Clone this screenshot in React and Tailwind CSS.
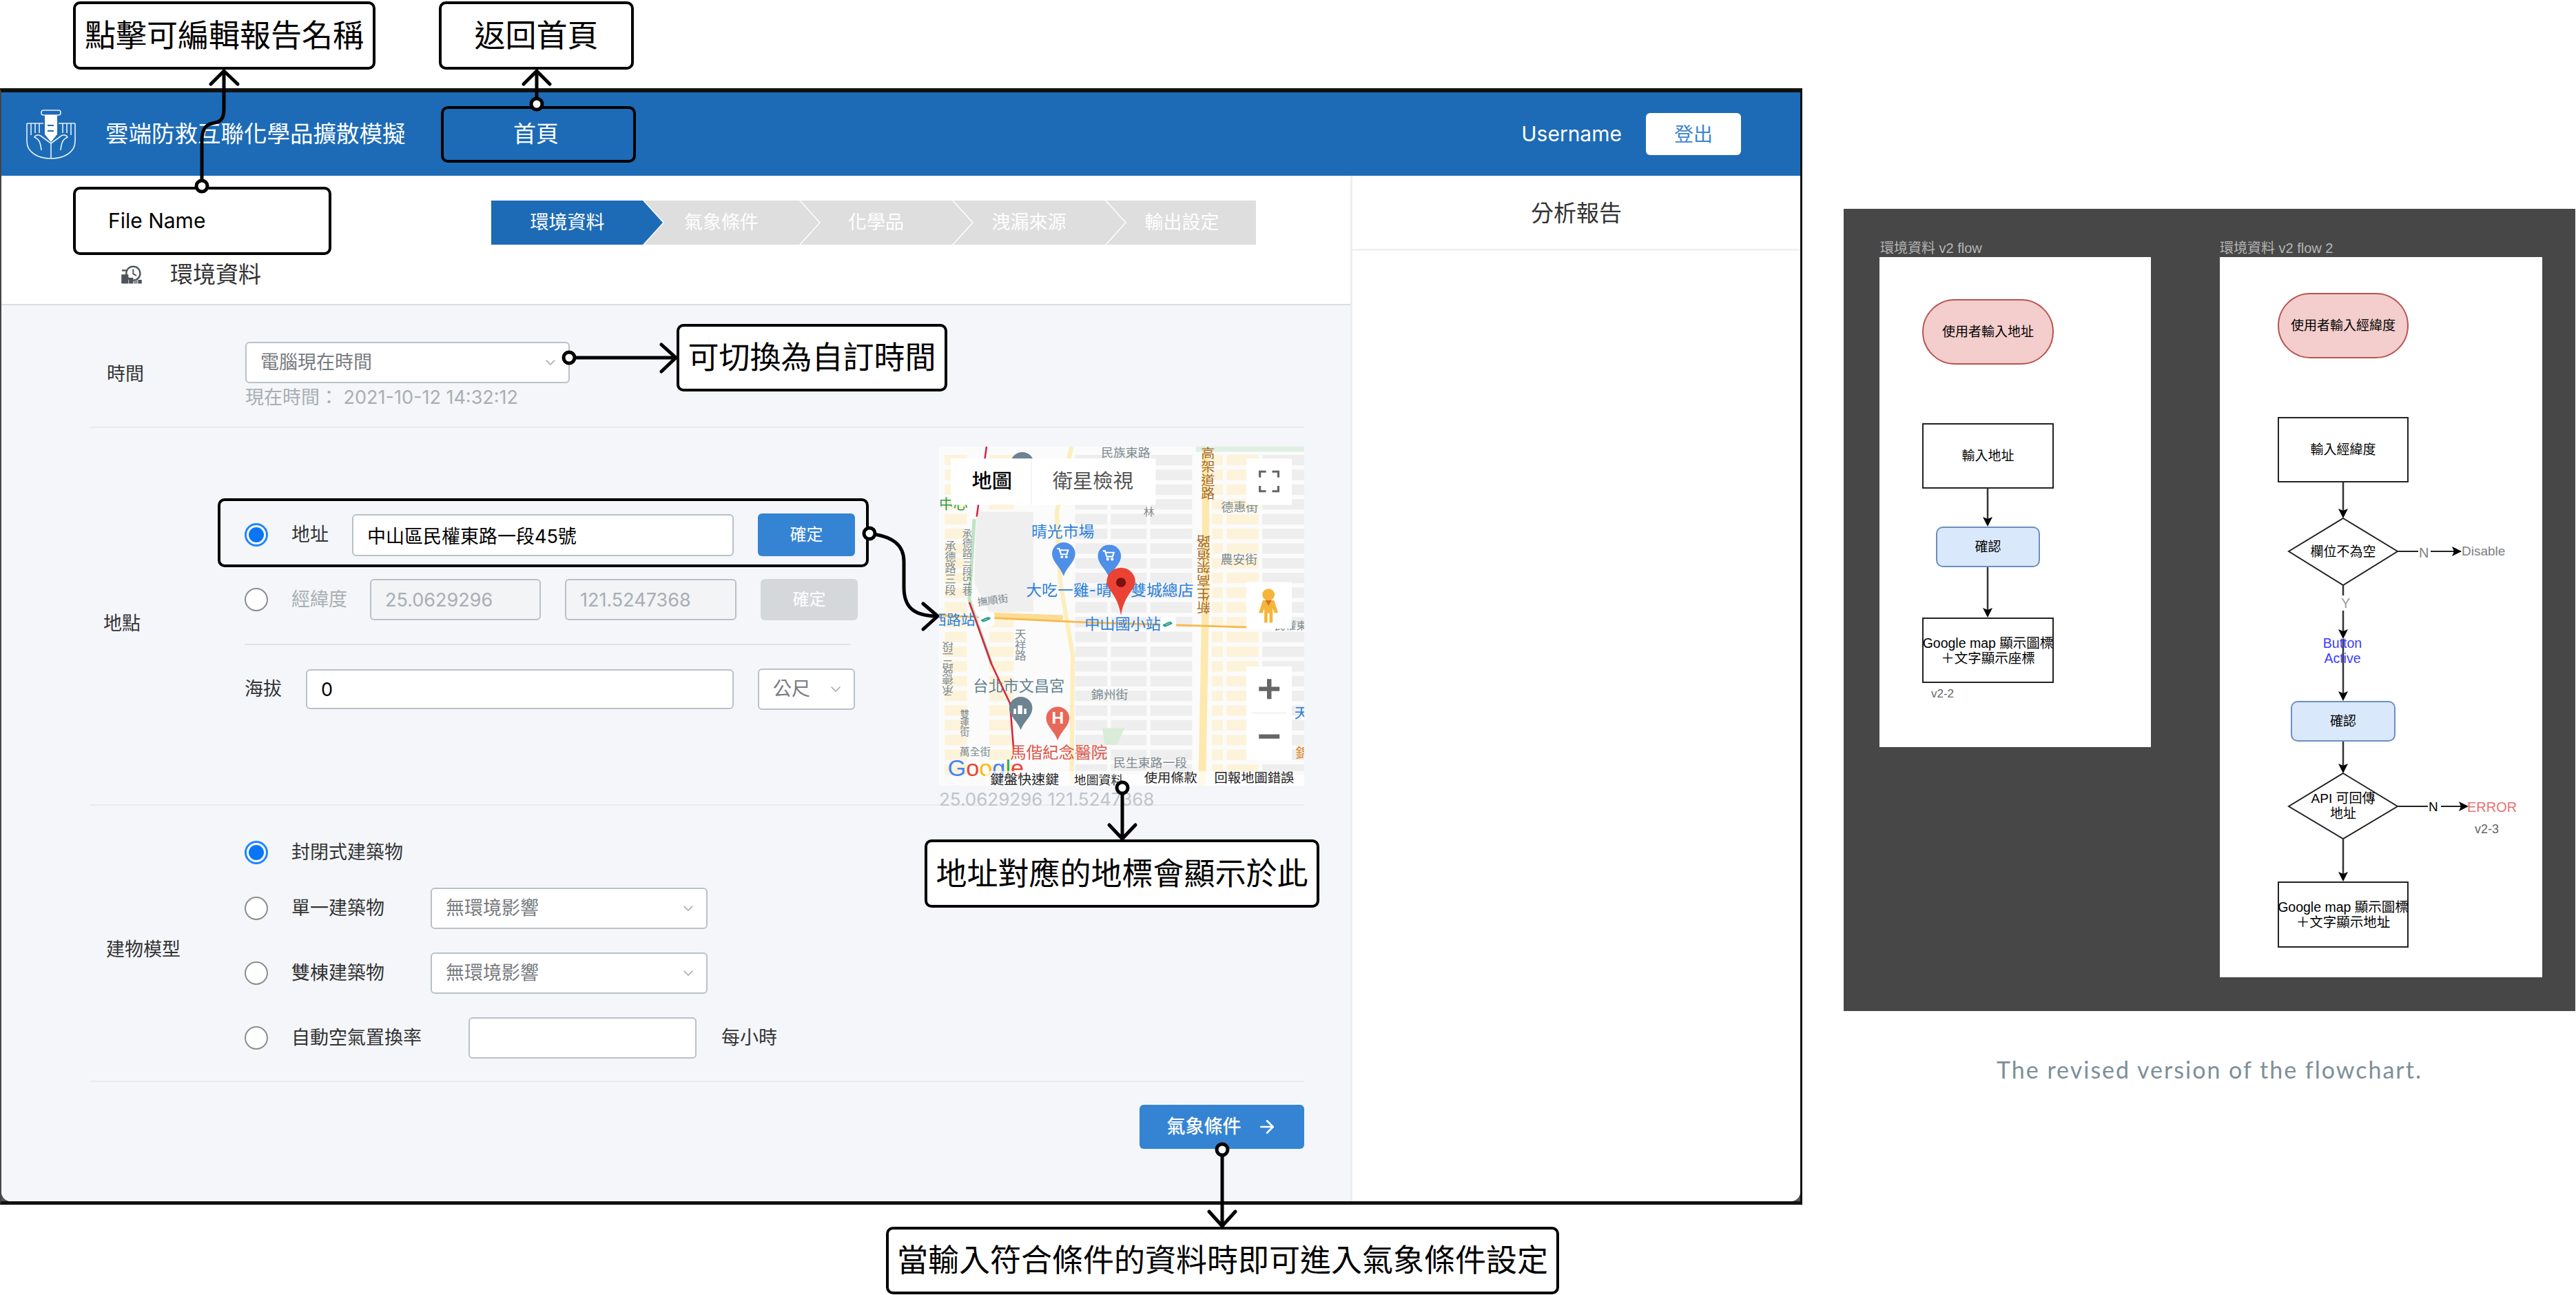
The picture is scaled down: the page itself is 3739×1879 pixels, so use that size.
import { ArrowRight, ChevronDown } from "lucide-react";

const steps = [
  { label: "環境資料", box: "w-[249px] pr-[28px] bg-[#1d6bb6] text-white [clip-path:polygon(0_0,calc(100%-29px)_0,100%_50%,calc(100%-29px)_100%,0_100%)]" },
  { label: "氣象條件", box: "w-[254px] -ml-[27px] pr-[30px] bg-[#dedede] text-white [clip-path:polygon(0_0,calc(100%-29px)_0,100%_50%,calc(100%-29px)_100%,0_100%,29px_50%)]" },
  { label: "化學品", box: "w-[249px] -ml-[27px] pr-[30px] bg-[#dedede] text-white [clip-path:polygon(0_0,calc(100%-29px)_0,100%_50%,calc(100%-29px)_100%,0_100%,29px_50%)]" },
  { label: "洩漏來源", box: "w-[249px] -ml-[27px] pr-[30px] bg-[#dedede] text-white [clip-path:polygon(0_0,calc(100%-29px)_0,100%_50%,calc(100%-29px)_100%,0_100%,29px_50%)]" },
  { label: "輸出設定", box: "w-[217px] -ml-[27px] pl-[2px] bg-[#dedede] text-white [clip-path:polygon(0_0,100%_0,100%_100%,0_100%,29px_50%)]" },
];

function Logo() {
  return (
    <svg viewBox="0 0 100 90" className="w-[100px] h-[90px] -mx-[12px]" fill="none" stroke="#e6f0fa" strokeWidth="1.6">
      <rect x="35" y="10" width="28" height="7" rx="3" />
      <path d="M40 17h18v28l-9 11-9-11z" fill="#fff" stroke="none" />
      <path d="M44 32h9M44 40h9" stroke="#1d6bb6" strokeWidth="2" />
      <path d="M14 29v26c0 16 16 25 35 25s35-9 35-25V29" />
      <path d="M14 29h24M60 29h24M20 29v17M26 29v14M32 29v14M66 29v14M72 29v14M78 29v17" />
      <path d="M49 80V58L34 47c-3-2-8-1-9 2 9 4 9 12 10 19M49 58l15-11c3-2 8-1 9 2-9 4-9 12-10 19" />
    </svg>
  );
}

function SectionIcon() {
  return (
    <svg viewBox="13 6 42 36" className="w-[34px] h-[28px]" fill="#4d5358">
      <circle cx="37" cy="21" r="13" fill="none" stroke="#4d5358" strokeWidth="3" />
      <path d="M37 13v9l6 3" fill="none" stroke="#4d5358" strokeWidth="2.5" />
      <rect x="16" y="14" width="9" height="3" />
      <rect x="15" y="23" width="13" height="17" />
      <rect x="29" y="29" width="8" height="11" />
      <rect x="38" y="34" width="7" height="6" fill="#8a9095" />
      <rect x="46" y="33" width="7" height="7" />
    </svg>
  );
}

function Radio({ on }) {
  return (
    <span className={on ? "w-[34px] h-[34px] shrink-0 rounded-full border-[3px] border-[#1f86ff] bg-white flex items-center justify-center" : "w-[34px] h-[34px] shrink-0 rounded-full border-2 border-[#8d8d8d] bg-white"}>
      {on && <span className="w-[22px] h-[22px] rounded-full bg-[#0b76f5]" />}
    </span>
  );
}

function Callout({ className, children }) {
  return (
    <div className={`absolute z-10 flex items-center justify-center bg-white border-4 border-black rounded-[10px] text-[45px] text-black ${className}`}>
      {children}
    </div>
  );
}

function SelectBox({ className, text }) {
  return (
    <div className={`flex items-center justify-between h-[60px] bg-white border-2 border-[#b9c1c8] rounded-[6px] pl-[20px] pr-[14px] text-[27px] text-[#777b80] ${className}`}>
      <span>{text}</span>
      <ChevronDown size={24} strokeWidth={1.5} className="text-[#9aa6ae]" />
    </div>
  );
}

/* ---- map drawing, coordinates follow a 1483 x 1427 grid ---- */
const blockCols = [
  [60, 150], [240, 340], [590, 720], [735, 880], [895, 1065], [1145, 1190], [1205, 1335], [1350, 1520],
];
const mapBlocks = [];
blockCols.forEach((col, i) => {
  for (let j = 0; j < 22; j++) {
    const y = 60 + j * 62;
    const k = (i * 3 + j * 5) % 5;
    mapBlocks.push({ x: col[0], y, w: col[1] - col[0], fill: k === 0 || k === 3 ? "#fdf3da" : "#eeeeee" });
  }
});

function MapText({ x, y, size = 50, fill = "#7d8a8f", vertical, rotate, children }) {
  return (
    <text
      x={x}
      y={y}
      fontSize={size}
      fill={fill}
      transform={rotate}
      className={vertical ? "[writing-mode:vertical-rl]" : ""}
    >
      {children}
    </text>
  );
}

function Pin({ x, y, r = 47, tip = 95, fill }) {
  return (
    <path
      d={`M${x} ${y + tip}C${x - 13} ${y + 55} ${x - r} ${y + 35} ${x - r} ${y}A${r} ${r} 0 1 1 ${x + r} ${y}C${x + r} ${y + 35} ${x + 13} ${y + 55} ${x} ${y + tip}Z`}
      fill={fill}
    />
  );
}

function Cart({ x, y }) {
  return (
    <g transform={`translate(${x} ${y})`} fill="none" stroke="#fff" strokeWidth="6">
      <path d="M-24-18h9l7 24h24l5-17H-12" />
      <circle cx="-4" cy="17" r="3" />
      <circle cx="14" cy="17" r="3" />
    </g>
  );
}

function MapView() {
  return (
    <svg viewBox="37 25 1483 1427" preserveAspectRatio="none" className="block w-[530px] h-[492px] bg-[#fbfbfb]">
      {mapBlocks.map((b, i) => (
        <rect key={i} x={b.x} y={b.y} width={b.w} height="44" fill={b.fill} />
      ))}
      <path d="M190 300l-10 300 60 120h180V300z" fill="#efefef" />
      <path d="M700 1210l90 0-30 70H710z" fill="#d8ecd8" />
      <rect x="1075" y="25" width="60" height="1427" fill="#fbfbfb" />
      <path d="M1120 25V640L1105 1452" stroke="#fde9ae" strokeWidth="30" fill="none" />
      <path d="M575 25 515 300 530 600 580 900 575 1452" stroke="#fdeebf" strokeWidth="18" fill="none" />
      <path d="M260 735 540 745" stroke="#fcdc94" strokeWidth="22" fill="none" />
      <path d="M37 735 640 765 1290 785" stroke="#f9b84a" strokeWidth="8" fill="none" />
      <path d="M180 330 160 670 250 940" stroke="#bfe3c3" strokeWidth="14" fill="none" />
      <path d="M230 25 190 320M160 680 250 940 325 1105 340 1300" stroke="#dd1e3f" strokeWidth="7" fill="none" />
      <path d="M1080 25h440v22h-440z" fill="#cfe8d0" opacity=".6" />

      <MapText x={695} y={68}>民族東路</MapText>
      <MapText x={1125} y={25} size={56} fill="#a5692a" vertical>高架道路</MapText>
      <MapText x={1115} y={360} size={56} fill="#a5692a" vertical rotate="rotate(180 1115 545)">新生高架道路</MapText>
      <MapText x={80} y={420} size={46} vertical>承德路三段</MapText>
      <MapText x={75} y={815} size={46} vertical rotate="rotate(180 75 945)">承德路二段</MapText>
      <MapText x={150} y={370} size={40} vertical>承德路三段51巷</MapText>
      <MapText x={365} y={790} size={46} vertical>天祥路</MapText>
      <MapText x={140} y={1130} size={38} vertical>雙連街</MapText>
      <MapText x={885} y={275} size={44} vertical>林</MapText>
      <MapText x={1183} y={298}>德惠街</MapText>
      <MapText x={1180} y={517}>農安街</MapText>
      <MapText x={195} y={695} size={42} rotate="rotate(-8 195 695)">撫順街</MapText>
      <MapText x={655} y={1088}>錦州街</MapText>
      <MapText x={120} y={1325} size={42}>萬全街</MapText>
      <MapText x={745} y={1375} size={50}>民生東路一段</MapText>
      <MapText x={175} y={1056} size={62} fill="#627f8e">台北市文昌宮</MapText>
      <MapText x={325} y={1336} size={66} fill="#e0554a">馬偕紀念醫院</MapText>
      <MapText x={412} y={405} size={64} fill="#2b7fdc">晴光市場</MapText>
      <MapText x={390} y={652} size={64} fill="#2b7fdc">大吃一雞-晴</MapText>
      <MapText x={815} y={652} size={64} fill="#2b7fdc">雙城總店</MapText>
      <MapText x={628} y={793} size={62} fill="#2b7fdc">中山國小站</MapText>
      <MapText x={10} y={775} size={58} fill="#2b7fdc">西路站</MapText>
      <MapText x={37} y={290} size={58} fill="#2d9b4e">中心</MapText>
      <MapText x={1480} y={1168} size={58} fill="#2b7fdc">天</MapText>
      <MapText x={1485} y={1335} size={58} fill="#e08a2e">錦</MapText>
      <MapText x={1400} y={795} size={44}>民權東</MapText>

      <rect x="198" y="720" width="64" height="62" rx="14" fill="#fff" />
      <path d="M208 757c14-2 18-14 34-12M246 748c-14 2-18 14-34 12" stroke="#2a9d8f" strokeWidth="6" fill="none" />
      <rect x="936" y="740" width="64" height="62" rx="14" fill="#fff" />
      <path d="M946 777c14-2 18-14 34-12M984 768c-14 2-18 14-34 12" stroke="#2a9d8f" strokeWidth="6" fill="none" />

      <Pin x={375} y={95} fill="#6c8391" />
      <Pin x={543} y={475} fill="#4e8fe8" />
      <Cart x={540} y={472} />
      <Pin x={729} y={485} fill="#4e8fe8" />
      <Cart x={726} y={482} />
      <Pin x={369} y={1125} tip={93} fill="#6c8391" />
      <path d="M340 1150v-22h10v22zM357 1150v-36h18v36zM382 1150v-22h10v22z" fill="#fff" />
      <Pin x={519} y={1167} tip={95} fill="#e8685a" />
      <text x={519} y={1192} fontSize="66" fontWeight="700" fill="#fff" textAnchor="middle">H</text>
      <Pin x={776} y={593} r={58} tip={143} fill="#ea4335" />
      <circle cx="776" cy="597" r="20" fill="#7c1010" />

      <rect x="85" y="75" width="832" height="195" rx="4" fill="#fff" />
      <path d="M412 75v195" stroke="#ececec" strokeWidth="3" />
      <text x={170} y={198} fontSize="82" fontWeight="500" fill="#000">地圖</text>
      <text x={498} y={198} fontSize="82" fill="#555">衛星檢視</text>

      <rect x="1285" y="75" width="185" height="195" rx="4" fill="#fff" />
      <path d="M1340 155v-25h25M1390 130h25v25M1415 190v23h-25M1365 213h-25v-23" stroke="#666" strokeWidth="9" fill="none" />

      <rect x="1285" y="595" width="185" height="195" rx="4" fill="#fff" />
      <circle cx="1375" cy="648" r="25" fill="#f5b53a" />
      <path d="M1352 672h46l16 52-14 2-8-20v60h-13v-40h-8v40h-13v-60l-8 20-14-2z" fill="#f5b53a" />
      <path d="M1362 672h26l-13 22z" fill="#d9722a" />

      <rect x="1285" y="950" width="185" height="395" rx="4" fill="#fff" />
      <path d="M1336 1045h84M1378 1003v84M1336 1245h84" stroke="#666" strokeWidth="18" fill="none" />
      <path d="M1310 1146h140" stroke="#e6e6e6" strokeWidth="3" />

      <text x={72} y={1412} fontSize="96" fontFamily="Liberation Sans, sans-serif">
        <tspan fill="#4285f4">G</tspan>
        <tspan fill="#ea4335">o</tspan>
        <tspan fill="#fbbc05">o</tspan>
        <tspan fill="#4285f4">g</tspan>
        <tspan fill="#34a853">l</tspan>
        <tspan fill="#ea4335">e</tspan>
      </text>
      <rect x="225" y="1390" width="1295" height="62" fill="#fff" opacity=".72" />
      <text x={245} y={1447} fontSize="56" fill="#222">鍵盤快速鍵</text>
      <text x={585} y={1447} fontSize="50" fill="#222">地圖資料</text>
      <text x={870} y={1437} fontSize="54" fill="#222">使用條款</text>
      <text x={1155} y={1437} fontSize="54" fill="#222">回報地圖錯誤</text>
    </svg>
  );
}

/* ---- flow chart pieces ---- */
function Node({ className, children }) {
  return (
    <div className={`absolute flex items-center justify-center text-center text-black leading-[22px] ${className}`}>
      {children}
    </div>
  );
}

function Label({ className, children }) {
  return <span className={`absolute leading-[22px] whitespace-nowrap ${className}`}>{children}</span>;
}

function Down({ x, y1, y2 }) {
  return (
    <g>
      <path d={`M${x} ${y1}V${y2 - 6}`} stroke="#333" strokeWidth="2.5" />
      <path d={`M${x} ${y2}L${x - 7} ${y2 - 14}L${x} ${y2 - 11}L${x + 7} ${y2 - 14}Z`} fill="#000" />
    </g>
  );
}

function Right({ x, y }) {
  return <path d={`M${x} ${y}L${x - 14} ${y - 7}L${x - 11} ${y}L${x - 14} ${y + 7}Z`} fill="#000" />;
}

function FlowOne() {
  return (
    <div className="relative w-[394px] h-[711px] bg-white text-[19px]">
      <Label className="left-[1px] -top-[24px] text-[20px] text-[#b5b5b5]">環境資料 v2 flow</Label>
      <svg className="absolute inset-0 w-full h-full" fill="none">
        <Down x={157} y1={336} y2={391} />
        <Down x={157} y1={450} y2={523} />
      </svg>
      <Node className="left-[62px] top-[61px] w-[191px] h-[95px] rounded-[48px] bg-[#f3cecc] border-2 border-[#b85450]">使用者輸入地址</Node>
      <Node className="left-[62px] top-[241px] w-[191px] h-[95px] border-2 border-[#222]">輸入地址</Node>
      <Node className="left-[82px] top-[391px] w-[151px] h-[59px] rounded-[10px] bg-[#dae8fc] border-2 border-[#6c8ebf]">確認</Node>
      <Node className="left-[62px] top-[523px] w-[191px] h-[95px] border-2 border-[#222] text-[19.5px]">
        <span className="whitespace-nowrap">Google map 顯示圖標<br />＋文字顯示座標</span>
      </Node>
      <Label className="left-[75px] top-[623px] text-[17px] text-[#666]">v2-2</Label>
    </div>
  );
}

function FlowTwo() {
  return (
    <div className="relative w-[468px] h-[1045px] bg-white text-[19px]">
      <Label className="left-[0px] -top-[24px] text-[20px] text-[#b5b5b5]">環境資料 v2 flow 2</Label>
      <svg className="absolute inset-0 w-full h-full" fill="none">
        <Down x={179} y1={327} y2={379} />
        <path d="M179 379 258 427 179 476 100 427Z" stroke="#222" strokeWidth="2" />
        <Down x={179} y1={476} y2={554} />
        <Down x={179} y1={554} y2={644} />
        <path d="M258 427H288M306 427H350" stroke="#222" strokeWidth="2" />
        <Right x={351} y={427} />
        <Down x={179} y1={703} y2={749} />
        <path d="M179 749 258 797 179 844 100 797Z" stroke="#222" strokeWidth="2" />
        <Down x={179} y1={844} y2={906} />
        <path d="M258 797H302M321 797H358" stroke="#222" strokeWidth="2" />
        <Right x={361} y={797} />
      </svg>
      <Node className="left-[84px] top-[52px] w-[190px] h-[95px] rounded-[48px] bg-[#f3cecc] border-2 border-[#b85450]">使用者輸入經緯度</Node>
      <Node className="left-[84px] top-[232px] w-[190px] h-[95px] border-2 border-[#222]">輸入經緯度</Node>
      <Node className="left-[100px] top-[379px] w-[158px] h-[97px]">欄位不為空</Node>
      <Label className="left-[289px] top-[418px] text-[20px] text-[#808080]">N</Label>
      <Label className="left-[351px] top-[416px] text-[19px] text-[#808080]">Disable</Label>
      <Label className="left-[175px] top-[491px] px-[1px] text-[20px] text-[#999] bg-white">Y</Label>
      <Node className="left-[128px] top-[549px] w-[100px] h-[44px] text-[19.5px]">
        <span className="text-[#3b3bff]">Button<br />Active</span>
      </Node>
      <Node className="left-[103px] top-[644px] w-[152px] h-[59px] rounded-[10px] bg-[#dae8fc] border-2 border-[#6c8ebf]">確認</Node>
      <Node className="left-[100px] top-[749px] w-[158px] h-[95px]">
        <span>API 可回傳<br />地址</span>
      </Node>
      <Label className="left-[303px] top-[787px] text-[19px] text-black">N</Label>
      <Label className="left-[359px] top-[787px] text-[20px] text-[#e57373]">ERROR</Label>
      <Label className="left-[370px] top-[819px] text-[18px] text-[#666]">v2-3</Label>
      <Node className="left-[84px] top-[906px] w-[190px] h-[96px] border-2 border-[#222] text-[19.5px]">
        <span className="whitespace-nowrap">Google map 顯示圖標<br />＋文字顯示地址</span>
      </Node>
    </div>
  );
}

export default function App() {
  return (
    <div className="relative flex items-start w-[3739px] h-[1879px] overflow-hidden bg-white font-['Inter','Noto_Sans_CJK_TC',sans-serif] text-[#333]">
      {/* window frame */}
      <div className="mt-[128px] w-[2616px] h-[1620px] shrink-0 border-t-[6px] border-b-[5px] border-r-[3px] border-l-2 border-t-[#111] border-b-[#111] border-r-[#111] border-l-[#444] bg-[#555]">
        <div className="flex flex-col h-full rounded-b-[14px] overflow-hidden bg-white">
          <header className="flex items-center h-[121px] shrink-0 bg-[#1d6bb6] pl-[35px] pr-[86px]">
            <Logo />
            <span className="ml-[40px] w-[487px] text-[33.5px] text-white">雲端防救互聯化學品擴散模擬</span>
            <div className="flex items-center justify-center w-[283px] h-[82px] border-4 border-black rounded-[10px] pr-[7px] text-[33px] text-white">首頁</div>
            <span className="ml-auto text-[30px] text-white">Username</span>
            <button className="ml-[35px] w-[138px] h-[61px] bg-white rounded-[6px] text-[28px] text-[#3a84d1]">登出</button>
          </header>

          <div className="flex flex-1 min-h-0">
            <main className="flex flex-col w-[1958px] shrink-0">
              <div className="h-[188px] shrink-0 border-b-2 border-[#d9dee4] bg-white pt-[36px]">
                <div className="flex h-[64px] ml-[711px]">
                  {steps.map((s) => (
                    <div key={s.label} className={`flex items-center justify-center text-[27px] ${s.box}`}>{s.label}</div>
                  ))}
                </div>
                <div className="flex items-center h-[44px] mt-[22px] ml-[172px]">
                  <SectionIcon />
                  <span className="ml-[39px] text-[33px] text-[#333]">環境資料</span>
                </div>
              </div>

              <div className="flex-1 bg-[#f4f6fa] pl-[129px] pr-[67px]">
                {/* time */}
                <section className="flex h-[178px] border-b-2 border-[#e8eaed] pt-[53px]">
                  <div className="flex items-center w-[225px] h-[94px] pl-[24px] text-[27px]">時間</div>
                  <div>
                    <SelectBox className="w-[471px] h-[58px]" text="電腦現在時間" />
                    <div className="mt-[4px] text-[27px] leading-[34px] text-[#a9aeb3]">現在時間： 2021-10-12 14:32:12</div>
                  </div>
                </section>

                {/* location */}
                <section className="flex h-[548px] border-b-2 border-[#e8eaed]">
                  <div className="flex items-center w-[224px] pl-[19px] pt-[22px] text-[27px]">地點</div>
                  <div className="w-[890px] pt-[124px]">
                    <div className="relative flex items-center h-[62px]">
                      <Radio on />
                      <span className="ml-[34px] w-[88px] text-[27px]">地址</span>
                      <input readOnly value="中山區民權東路一段45號" className="w-[554px] h-[61px] bg-white border-2 border-[#b9c1c8] rounded-[6px] pl-[20px] text-[27px] text-black" />
                      <button className="ml-[35px] w-[141px] h-[62px] rounded-[6px] bg-[#3584d3] text-[24px] text-white">確定</button>
                      <div className="absolute -left-[39px] -top-[22px] w-[945px] h-[100px] border-4 border-black rounded-[10px]" />
                    </div>
                    <div className="flex items-center h-[60px] mt-[33px]">
                      <Radio />
                      <span className="ml-[34px] w-[114px] text-[27px] text-[#a9aeb3]">經緯度</span>
                      <input readOnly value="25.0629296" className="w-[248px] h-[60px] bg-[#f2f4f6] border-2 border-[#b9c1c8] rounded-[6px] pl-[20px] text-[27px] text-[#a9aeb3]" />
                      <input readOnly value="121.5247368" className="ml-[35px] w-[249px] h-[60px] bg-[#f2f4f6] border-2 border-[#b9c1c8] rounded-[6px] pl-[20px] text-[27px] text-[#a9aeb3]" />
                      <button className="ml-[35px] w-[141px] h-[60px] rounded-[6px] bg-[#d4d8db] text-[24px] text-white">確定</button>
                    </div>
                    <div className="w-[879px] h-[2px] mt-[34px] bg-[#e0e3e6]" />
                    <div className="flex items-center h-[58px] mt-[35px]">
                      <span className="w-[89px] text-[27px]">海拔</span>
                      <input readOnly value="0" className="w-[621px] h-[58px] bg-white border-2 border-[#b9c1c8] rounded-[6px] pl-[20px] text-[27px] text-black" />
                      <SelectBox className="ml-[35px] w-[141px] h-[58px]" text="公尺" />
                    </div>
                  </div>
                  <div className="ml-auto w-[530px] pt-[27px]">
                    <MapView />
                    <div className="mt-[4px] text-[26px] leading-[32px] text-[#c0c4c8] whitespace-nowrap">25.0629296 121.5247368</div>
                  </div>
                </section>

                {/* building */}
                <section className="flex h-[401px] border-b-2 border-[#e8eaed]">
                  <div className="flex items-center w-[224px] pl-[23px] pt-[20px] text-[27px]">建物模型</div>
                  <div className="pt-[38px] text-[27px]">
                    <div className="flex items-center h-[60px]">
                      <Radio on />
                      <span className="ml-[34px]">封閉式建築物</span>
                    </div>
                    <div className="flex items-center h-[60px] mt-[21px]">
                      <Radio />
                      <span className="ml-[34px] w-[202px]">單一建築物</span>
                      <SelectBox className="w-[402px]" text="無環境影響" />
                    </div>
                    <div className="flex items-center h-[60px] mt-[34px]">
                      <Radio />
                      <span className="ml-[34px] w-[202px]">雙棟建築物</span>
                      <SelectBox className="w-[402px]" text="無環境影響" />
                    </div>
                    <div className="flex items-center h-[60px] mt-[34px]">
                      <Radio />
                      <span className="ml-[34px] w-[257px]">自動空氣置換率</span>
                      <input readOnly className="w-[331px] h-[60px] bg-white border-2 border-[#b9c1c8] rounded-[6px]" />
                      <span className="ml-[36px]">每小時</span>
                    </div>
                  </div>
                </section>

                <div className="flex justify-end pt-[33px]">
                  <button className="flex items-center justify-center gap-[22px] w-[239px] h-[64px] rounded-[6px] bg-[#3584d3] text-[27px] font-medium text-white">
                    氣象條件
                    <ArrowRight size={30} strokeWidth={2} />
                  </button>
                </div>
              </div>
            </main>

            <aside className="flex-1 bg-white border-l-[3px] border-[#eceef1]">
              <div className="flex items-center justify-center h-[109px] pt-[4px] border-b-[3px] border-[#f1f1f1] text-[33px] text-[#333]">分析報告</div>
            </aside>
          </div>
        </div>
      </div>

      {/* flowchart picture */}
      <div className="ml-[60px] mt-[303px] w-[1062px] shrink-0 font-['Liberation_Sans','Noto_Sans_CJK_TC',sans-serif]">
        <div className="flex items-start gap-[100px] h-[1164px] bg-[#474747] pl-[52px] pt-[70px]">
          <FlowOne />
          <FlowTwo />
        </div>
        <p className="mt-[63px] text-center text-[34px] leading-[44px] tracking-[2px] text-[#7d8f99] font-['Lato',sans-serif]">The revised version of the flowchart.</p>
      </div>

      {/* annotations laid over the page */}
      <Callout className="left-[106px] top-[2px] w-[439px] h-[99px]">點擊可編輯報告名稱</Callout>
      <Callout className="left-[637px] top-[2px] w-[283px] h-[99px]">返回首頁</Callout>
      <Callout className="left-[106px] top-[271px] w-[375px] h-[99px] !justify-start pl-[47px] !text-[30px]">File Name</Callout>
      <Callout className="left-[982px] top-[470px] w-[393px] h-[98px]">可切換為自訂時間</Callout>
      <Callout className="left-[1342px] top-[1218px] w-[573px] h-[99px]">地址對應的地標會顯示於此</Callout>
      <Callout className="left-[1286px] top-[1780px] w-[977px] h-[98px]">當輸入符合條件的資料時即可進入氣象條件設定</Callout>

      <svg className="absolute inset-0 z-20 w-[3739px] h-[1879px] pointer-events-none" fill="none" stroke="#000" strokeWidth="5" strokeLinecap="round" strokeLinejoin="round">
        <path d="M293 270V205C293 185 300 180 312 178C322 176 325 170 325 158V104M306 122 325 103 345 122" />
        <path d="M779 151V104M760 122 779 103 798 122" />
        <path d="M826 519H980M960 500 981 519 960 539" />
        <path d="M1262 774C1295 778 1312 790 1312 815V852C1312 880 1325 893 1358 894M1340 876 1361 894 1340 913" />
        <path d="M1629 1143V1216M1610 1197 1629 1217 1648 1197" />
        <path d="M1774 1668V1778M1755 1758 1774 1779 1793 1758" />
        <g fill="#fff">
          <circle cx="293" cy="270" r="8" />
          <circle cx="779" cy="151" r="8" />
          <circle cx="826" cy="519" r="8" />
          <circle cx="1262" cy="774" r="8" />
          <circle cx="1629" cy="1143" r="8" />
          <circle cx="1774" cy="1668" r="8" />
        </g>
      </svg>
    </div>
  );
}
